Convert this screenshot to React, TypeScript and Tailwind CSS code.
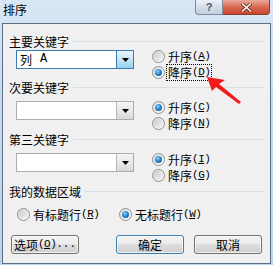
import React from "react";

const FONT = { fontFamily: '"Noto Sans CJK SC", "Noto Sans", sans-serif' };

function Acc({ k }: { k: string }) {
  return (
    <span className="text-[11px] tracking-[-0.5px]" style={{ fontFamily: '"Liberation Mono", monospace' }}>
      (<span className="underline">{k}</span>)
    </span>
  );
}

function Radio({ checked, label, k, focus }: { checked?: boolean; label: string; k: string; focus?: boolean }) {
  return (
    <div className="flex items-center h-[16px]">
      <div
        className="w-[13px] h-[13px] rounded-full border border-[#8e8f8f] flex items-center justify-center shrink-0"
        style={{ background: "linear-gradient(135deg,#dcdcdc,#ffffff)" }}
      >
        {checked ? (
          <div
            className="w-[7px] h-[7px] rounded-full"
            style={{ background: "radial-gradient(circle at 40% 35%, #8fd0f8 0%, #2a8ad4 45%, #0b3f7a 100%)" }}
          />
        ) : (
          <div className="w-[9px] h-[9px] rounded-full bg-gradient-to-br from-[#cbcbcb] to-[#f4f4f4]" />
        )}
      </div>
      <div
        className={`ml-[2px] px-[1px] h-[15px] flex items-center leading-[13px] text-[12px] text-black ${
          focus ? "outline outline-1 outline-dotted outline-black" : ""
        }`}
      >
        {label}
        <Acc k={k} />
      </div>
    </div>
  );
}

function Combo({ value, focused }: { value?: boolean; focused?: boolean }) {
  return (
    <div
      className={`w-[118px] h-[19px] bg-white border flex ${focused ? "border-[#3d7bad]" : "border-[#abadb3]"}`}
    >
      <div className="flex-1 flex items-center pl-[3px] text-[12px] leading-[13px] text-black">
        {value ? (
          <>
            <span>列</span>
            <span className="ml-[8px] text-[12px]" style={{ fontFamily: '"Liberation Mono", monospace' }}>A</span>
          </>
        ) : null}
      </div>
      <div
        className={`w-[17px] h-full flex items-center justify-center border-l ${
          focused ? "border-[#3d7bad]" : "border-[#b6b6b6]"
        }`}
        style={{
          background: focused
            ? "linear-gradient(#e9f6fd,#c4e5f6 50%,#98d1ef)"
            : "linear-gradient(#f5f5f5,#e9e9e9 50%,#d8d8d8)",
        }}
      >
        <svg width="7" height="4" viewBox="0 0 7 4">
          <path d="M0 0h7L3.5 4z" fill="#000" />
        </svg>
      </div>
    </div>
  );
}

function Header({ text }: { text: string }) {
  return (
    <div className="flex items-center h-[14px] pl-[6px] pr-[6px]">
      <span className="text-[12px] leading-[13px] text-black whitespace-nowrap">{text}</span>
      <div className="flex-1 h-px bg-[#d5dfe5] ml-[4px]" />
    </div>
  );
}

function Btn({ children, def }: { children: React.ReactNode; def?: boolean }) {
  return (
    <div
      className={`w-[68px] h-[19px] rounded-[3px] border flex items-center justify-center text-[12px] leading-[13px] text-black ${
        def ? "border-[#3c7fb1]" : "border-[#707070]"
      }`}
      style={{ background: "linear-gradient(#f2f2f2,#ebebeb 50%,#dddddd 50%,#cfcfcf)", boxShadow: "inset 0 0 0 1px rgba(255,255,255,0.7)" }}
    >
      {children}
    </div>
  );
}

export default function App() {
  return (
    <div
      className="relative w-[273px] h-[265px] overflow-hidden flex flex-col"
      style={{ ...FONT, background: "linear-gradient(#d9e6f5,#c6d9ef 40%,#bdd3ec)" }}
    >
      {/* title bar */}
      <div className="h-[23px] flex items-start shrink-0">
        <div className="pl-[3px] pt-[3px] text-[12px] leading-[14px] text-black">排序</div>
        <div className="flex-1" />
        <div className="flex mr-[3px]">
          <div
            className="w-[28px] h-[15px] border border-[#7a8ba2] border-t-0 rounded-bl-[4px] flex items-center justify-center text-[11px] font-bold text-[#4a5a70]"
            style={{ background: "linear-gradient(#eef2f8,#d3dde9 50%,#c3d0e0)", fontFamily: '"Liberation Sans", sans-serif' }}
          >
            ?
          </div>
          <div
            className="w-[47px] h-[15px] border border-[#8a3e30] border-t-0 border-l-0 rounded-br-[4px] flex items-center justify-center"
            style={{ background: "linear-gradient(#eaaa9c,#d86a52 50%,#c8452e)" }}
          >
            <svg width="11" height="9" viewBox="0 0 11 9">
              <path d="M1.5 1 9.5 8M9.5 1 1.5 8" stroke="#5a241a" strokeWidth="3" strokeLinecap="square" />
              <path d="M1.5 1 9.5 8M9.5 1 1.5 8" stroke="#ffffff" strokeWidth="1.6" strokeLinecap="square" />
            </svg>
          </div>
        </div>
      </div>

      {/* body */}
      <div className="ml-[2px] w-[269px] h-[241px] border border-[#5d6f86] bg-[#f0f0f0] flex flex-col text-black">
        <div className="mt-[10px]">
          <Header text="主要关键字" />
        </div>
        <div className="flex mt-0 h-[32px]">
          <div className="ml-[13px] mt-[2px]">
            <Combo value focused />
          </div>
          <div className="ml-[18px] flex flex-col">
            <Radio label="升序" k="A" />
            <Radio label="降序" k="D" checked focus />
          </div>
        </div>

        <Header text="次要关键字" />
        <div className="flex mt-[5px] h-[32px]">
          <div className="ml-[13px] mt-[2px]">
            <Combo />
          </div>
          <div className="ml-[18px] flex flex-col">
            <Radio label="升序" k="C" checked />
            <Radio label="降序" k="N" />
          </div>
        </div>

        <div className="mt-[1px]">
          <Header text="第三关键字" />
        </div>
        <div className="flex mt-[5px] h-[32px]">
          <div className="ml-[13px] mt-[2px]">
            <Combo />
          </div>
          <div className="ml-[18px] flex flex-col">
            <Radio label="升序" k="I" checked />
            <Radio label="降序" k="G" />
          </div>
        </div>

        <div className="mt-[1px]">
          <Header text="我的数据区域" />
        </div>
        <div className="flex mt-[8px] ml-[14px]">
          <div className="w-[102px]">
            <Radio label="有标题行" k="R" />
          </div>
          <Radio label="无标题行" k="W" checked />
        </div>

        <div className="flex mt-[13px] ml-[8px]">
          <Btn>
            选项<Acc k="O" />
            <span style={{ fontFamily: '"Liberation Mono", monospace' }} className="text-[11px]">...</span>
          </Btn>
          <div className="ml-[37px]">
            <Btn def>确定</Btn>
          </div>
          <div className="ml-[10px]">
            <Btn>取消</Btn>
          </div>
        </div>
      </div>

      {/* red annotation arrow */}
      <svg className="absolute left-0 top-0 pointer-events-none" width="273" height="265" viewBox="0 0 273 265">
        <path d="M207 77 L225 80 L219 84 L241 102 L239 104 L216 87 L212 91 Z" fill="#f21a1a" />
      </svg>
    </div>
  );
}
